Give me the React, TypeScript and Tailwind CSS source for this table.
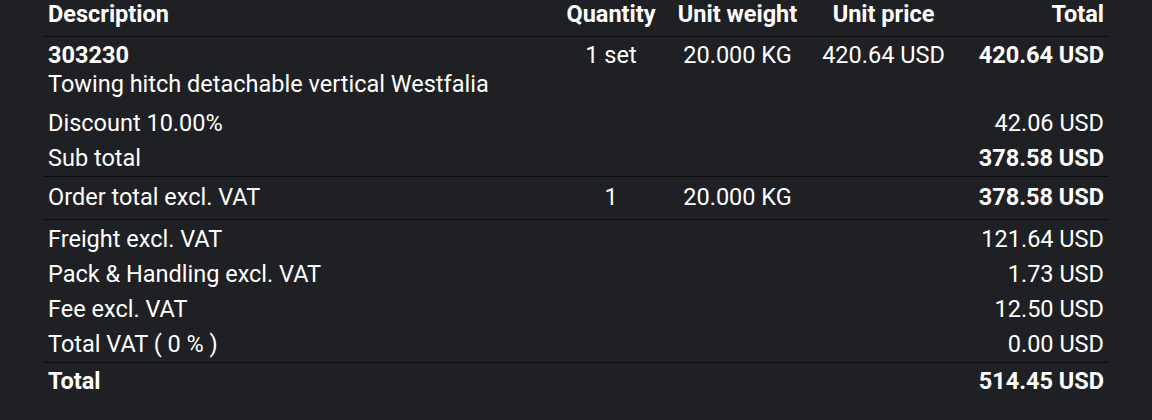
const rows = [
  { label: "Discount 10.00%", total: "42.06 USD" },
  { label: "Sub total", total: "378.58 USD", bold: true, line: true },
];

const fees = [
  { label: "Freight excl. VAT", total: "121.64 USD", first: true },
  { label: "Pack & Handling excl. VAT", total: "1.73 USD" },
  { label: "Fee excl. VAT", total: "12.50 USD" },
  { label: "Total VAT ( 0 % )", total: "0.00 USD", line: true },
];

export default function App() {
  return (
    <div
      className="h-[420px] w-full bg-[#1f2023] px-[44px] text-white"
      style={{ fontFamily: "Roboto, 'Noto Sans', sans-serif" }}
    >
      <table className="w-full table-fixed border-collapse text-[23.5px] leading-[29px]">
        <colgroup>
          <col />
          <col className="w-[96px]" />
          <col className="w-[157px]" />
          <col className="w-[135px]" />
          <col className="w-[157px]" />
        </colgroup>
        <thead>
          <tr className="border-b border-[#0d0d0f] font-bold">
            <th className="px-1 pt-0 pb-[7px] text-left">Description</th>
            <th className="px-0 pt-0 pb-[7px] text-center">Quantity</th>
            <th className="px-0 pt-0 pb-[7px] text-center">Unit weight</th>
            <th className="px-0 pt-0 pb-[7px] text-center">Unit price</th>
            <th className="px-1 pt-0 pb-[7px] text-right">Total</th>
          </tr>
        </thead>
        <tbody>
          <tr className="align-top">
            <td className="px-1 pt-1 pb-[7px]">
              <div className="font-bold">303230</div>
              <div>Towing hitch detachable vertical Westfalia</div>
            </td>
            <td className="pt-1 text-center">1 set</td>
            <td className="pt-1 text-center">20.000 KG</td>
            <td className="pt-1 text-center">420.64 USD</td>
            <td className="px-1 pt-1 text-right font-bold">420.64 USD</td>
          </tr>
          {rows.map((r) => (
            <tr
              key={r.label}
              className={r.line ? "border-b border-[#0d0d0f]" : ""}
            >
              <td className="px-1 py-[3px]">{r.label}</td>
              <td />
              <td />
              <td />
              <td
                className={
                  r.bold
                    ? "px-1 py-[3px] text-right font-bold"
                    : "px-1 py-[3px] text-right"
                }
              >
                {r.total}
              </td>
            </tr>
          ))}
          <tr className="border-b border-[#0d0d0f]">
            <td className="px-1 pt-[6px] pb-[7px]">Order total excl. VAT</td>
            <td className="pt-[6px] pb-[7px] text-center">1</td>
            <td className="pt-[6px] pb-[7px] text-center">20.000 KG</td>
            <td />
            <td className="px-1 pt-[6px] pb-[7px] text-right font-bold">
              378.58 USD
            </td>
          </tr>
          {fees.map((f) => (
            <tr
              key={f.label}
              className={f.line ? "border-b border-[#0d0d0f]" : ""}
            >
              <td className={f.first ? "px-1 pt-[5px] pb-[3px]" : "px-1 py-[3px]"}>
                {f.label}
              </td>
              <td />
              <td />
              <td />
              <td
                className={
                  f.first
                    ? "px-1 pt-[5px] pb-[3px] text-right"
                    : "px-1 py-[3px] text-right"
                }
              >
                {f.total}
              </td>
            </tr>
          ))}
          <tr className="font-bold">
            <td className="px-1 pt-1 pb-[3px]">Total</td>
            <td />
            <td />
            <td />
            <td className="px-1 pt-1 pb-[3px] text-right">514.45 USD</td>
          </tr>
        </tbody>
      </table>
    </div>
  );
}
